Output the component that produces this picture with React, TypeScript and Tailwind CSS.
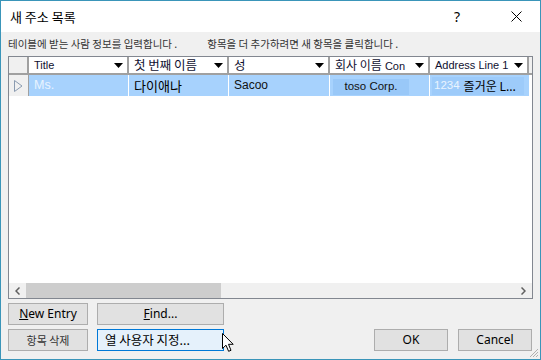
import React from "react";

const ko = { fontFamily: '"Noto Sans CJK KR", "Noto Sans", sans-serif' };
const ui = { fontFamily: '"Noto Sans", "Noto Sans CJK KR", sans-serif' };
const grid = { fontFamily: '"Liberation Sans", "Noto Sans CJK KR", sans-serif' };

// black dropdown arrow used in column headers
function DropArrow() {
  return (
    <svg width="9" height="5" viewBox="0 0 9 5" className="shrink-0">
      <path d="M0 0 H9 L4.5 5 Z" fill="#000" />
    </svg>
  );
}

function HeaderCell({ label, width }: { label: React.ReactNode; width: string }) {
  return (
    <div
      className={`${width} h-full flex items-center justify-between pl-[5px] pr-[4px] bg-white border-r-2 border-[#a0a0a0] text-[11px] text-[#101030]`}
      style={grid}
    >
      <span className="whitespace-nowrap leading-[16px]">{label}</span>
      <DropArrow />
    </div>
  );
}

function Button({
  children,
  className = "",
  focused = false,
}: {
  children: React.ReactNode;
  className?: string;
  focused?: boolean;
}) {
  return (
    <div
      className={`h-[22px] flex items-center justify-center text-[12px] text-black border ${
        focused ? "bg-[#e5f1fb] border-[#0078d7]" : "bg-[#e1e1e1] border-[#adadad]"
      } ${className}`}
      style={ui}
    >
      {children}
    </div>
  );
}

export default function App() {
  return (
    <div className="relative w-[541px] h-[360px] border border-[#3a95b9] bg-[#f0f0f0] flex flex-col overflow-hidden">
      {/* title bar */}
      <div className="h-[31px] bg-white flex items-center pl-[9px] shrink-0">
        <span className="text-[13px] text-black" style={ko}>
          새 주소 목록
        </span>
        <span className="ml-auto text-[14px] text-black mr-[51px]" style={ui}>
          ?
        </span>
        <svg width="11" height="11" viewBox="0 0 11 11" className="mr-[18px]">
          <path d="M0.5 0.5 L10.5 10.5 M10.5 0.5 L0.5 10.5" stroke="#000" strokeWidth="1" />
        </svg>
      </div>

      <div className="flex-1 flex flex-col px-[7px]">
        {/* instruction */}
        <div className="h-[24px] flex items-center text-[10.5px] text-[#333]" style={ko}>
          <span>테이블에 받는 사람 정보를 입력합니다 .</span>
          <span className="ml-[30px]">항목을 더 추가하려면 새 항목을 클릭합니다 .</span>
        </div>

        {/* grid */}
        <div className="w-[525px] h-[243px] border border-[#828790] bg-white flex flex-col">
          <div className="h-[18px] flex border-b-2 border-[#a0a0a0] shrink-0">
            <div className="w-[20px] h-full bg-[#f0f0f0] border-r-2 border-[#a0a0a0]" />
            <HeaderCell width="w-[100px]" label="Title" />
            <HeaderCell width="w-[100px]" label={<span style={ko} className="text-[12.5px]">첫 번째 이름</span>} />
            <HeaderCell width="w-[101px]" label={<span style={ko} className="text-[12.5px]">성</span>} />
            <HeaderCell
              width="w-[100px]"
              label={
                <>
                  <span style={ko} className="text-[12px]">회사 이름</span> Con
                </>
              }
            />
            <HeaderCell width="w-[99px]" label="Address Line 1" />
            <div className="flex-1 bg-[#f0f0f0]" />
          </div>

          {/* selected data row */}
          <div className="h-[21px] flex shrink-0" style={grid}>
            <div className="w-[20px] h-full bg-[#f0f0f0] border-r border-[#a0a0a0] flex items-center justify-center">
              <svg width="9" height="12" viewBox="0 0 9 12">
                <path d="M0.5 0.5 L8 6 L0.5 11.5 Z" fill="none" stroke="#8a9bb0" strokeWidth="1" />
              </svg>
            </div>
            <div className="w-[100px] h-full bg-[#a7d2fd] border-r border-white flex items-center pl-[5px] text-[12.5px] text-[#e9f4ff]">
              Ms.
            </div>
            <div className="w-[100px] h-full bg-[#a7d2fd] border-r border-white flex items-center pl-[5px] text-[13px] text-black" style={ko}>
              다이애나
            </div>
            <div className="w-[101px] h-full bg-[#a7d2fd] border-r border-white flex items-end pb-[2px] pl-[5px] text-[12px] text-[#111]">
              Sacoo
            </div>
            <div className="w-[100px] h-full bg-[#a7d2fd] border-r border-white flex items-center pl-[3px]">
              <div className="w-[76px] h-[16px] mt-[3px] bg-[#99c8f8] flex items-center justify-center text-[11.5px] text-[#111]">
                toso Corp.
              </div>
            </div>
            <div className="w-[99px] h-full bg-[#a7d2fd] flex items-center pl-[2px]">
              <div className="w-[92px] h-[18px] bg-[#9dcbfa] flex items-center pl-[2px] gap-[4px] text-[11.5px]">
                <span className="text-[#e9f4ff]">1234</span>
                <span className="text-black text-[12px]" style={ko}>
                  즐거운 L...
                </span>
              </div>
            </div>
            <div className="flex-1 bg-white" />
          </div>

          <div className="flex-1 bg-white" />

          {/* horizontal scrollbar */}
          <div className="h-[15px] bg-[#f0f0f0] flex items-center shrink-0">
            <div className="w-[17px] flex justify-center">
              <svg width="5" height="8" viewBox="0 0 5 8">
                <path d="M4.5 0.5 L1 4 L4.5 7.5" fill="none" stroke="#606060" strokeWidth="1.5" />
              </svg>
            </div>
            <div className="w-[195px] h-full bg-[#cdcdcd]" />
            <div className="flex-1" />
            <div className="w-[17px] flex justify-center">
              <svg width="5" height="8" viewBox="0 0 5 8">
                <path d="M0.5 0.5 L4 4 L0.5 7.5" fill="none" stroke="#606060" strokeWidth="1.5" />
              </svg>
            </div>
          </div>
        </div>

        {/* buttons */}
        <div className="mt-[4px] flex flex-col gap-[4px]">
          <div className="flex">
            <Button className="w-[80px]">
              <span>
                <span className="underline">N</span>ew Entry
              </span>
            </Button>
            <Button className="w-[127px] ml-[9px]">
              <span>
                <span className="underline">F</span>ind...
              </span>
            </Button>
          </div>
          <div className="flex">
            <Button className="w-[80px]">
              <span className="text-[11px] text-[#333]" style={ko}>
                항목 삭제
              </span>
            </Button>
            <Button className="w-[127px] ml-[9px] !justify-start pl-[7px]" focused>
              <span className="text-[12.5px]" style={ko}>
                열 사용자 지정...
              </span>
            </Button>
            <Button className="w-[74px] ml-auto">OK</Button>
            <Button className="w-[74px] ml-[10px]">Cancel</Button>
            <div className="w-[1px]" />
          </div>
        </div>
      </div>

      {/* mouse pointer */}
      <svg
        width="13"
        height="20"
        viewBox="0 0 13 20"
        className="absolute left-[221px] top-[332px]"
      >
        <path
          d="M0.5 0.5 L0.5 15.5 L4 12.2 L6.6 18.3 L9 17.3 L6.5 11.3 L11.2 11.3 Z"
          fill="#fff"
          stroke="#000"
          strokeWidth="1"
          strokeLinejoin="miter"
        />
      </svg>

      {/* resize grip */}
      <svg width="10" height="10" viewBox="0 0 10 10" className="absolute right-[1px] bottom-[1px]">
        <path d="M9 1 L1 9 M9 4 L4 9 M9 7 L7 9" stroke="#b0b0b0" strokeWidth="1" />
      </svg>
    </div>
  );
}
